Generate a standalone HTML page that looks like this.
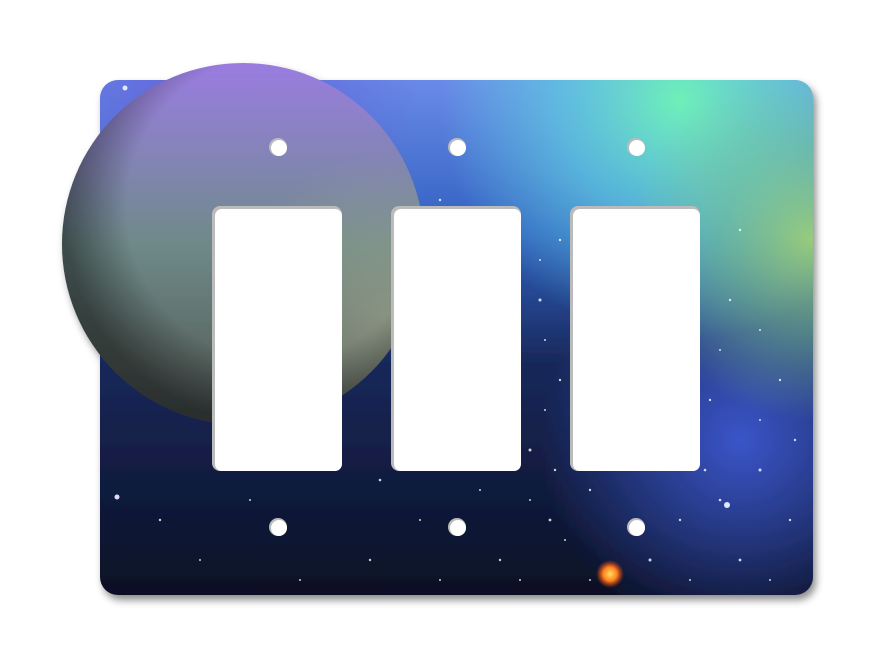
<!DOCTYPE html>
<html><head><style>
html,body{margin:0;padding:0;background:#fff;width:875px;height:658px;overflow:hidden}
svg{display:block}
</style></head><body>
<svg width="875" height="658" viewBox="0 0 875 658" xmlns="http://www.w3.org/2000/svg">
<defs>
<radialGradient id="g1" cx="680" cy="100" r="240" gradientUnits="userSpaceOnUse">
<stop offset="0" stop-color="#6ff0b8"/><stop offset="0.5" stop-color="#5fd0e0" stop-opacity="0.7"/><stop offset="1" stop-color="#5fd0e0" stop-opacity="0"/></radialGradient>
<radialGradient id="g2" cx="810" cy="240" r="180" gradientUnits="userSpaceOnUse">
<stop offset="0" stop-color="#a8d870" stop-opacity="0.85"/><stop offset="0.5" stop-color="#80c880" stop-opacity="0.5"/><stop offset="1" stop-color="#80c880" stop-opacity="0"/></radialGradient>
<radialGradient id="g3" cx="740" cy="440" r="200" gradientUnits="userSpaceOnUse">
<stop offset="0" stop-color="#3a55c8"/><stop offset="1" stop-color="#3a55c8" stop-opacity="0"/></radialGradient>
<radialGradient id="g4" cx="220" cy="80" r="200" gradientUnits="userSpaceOnUse">
<stop offset="0" stop-color="#6060d8"/><stop offset="1" stop-color="#6060d8" stop-opacity="0"/></radialGradient>
<linearGradient id="bg" x1="0" y1="0" x2="0" y2="1">
<stop offset="0" stop-color="#6a8ae8"/><stop offset="0.3" stop-color="#3060c0"/><stop offset="0.55" stop-color="#18285a"/><stop offset="1" stop-color="#0a1024"/></linearGradient>
<linearGradient id="moon" x1="0" y1="0" x2="0" y2="1">
<stop offset="0" stop-color="#9a7ce0"/><stop offset="0.25" stop-color="#8484b8"/><stop offset="0.5" stop-color="#6e8a88"/><stop offset="0.8" stop-color="#5c6a66"/><stop offset="1" stop-color="#4a5050"/></linearGradient>
<radialGradient id="moonr" cx="0.9" cy="0.7" r="0.45">
<stop offset="0" stop-color="#b0b090" stop-opacity="0.5"/><stop offset="1" stop-color="#b0b090" stop-opacity="0"/></radialGradient>
<radialGradient id="moonl" cx="0.6" cy="0.4" r="0.6">
<stop offset="0.7" stop-color="#000" stop-opacity="0"/><stop offset="1" stop-color="#000" stop-opacity="0.45"/></radialGradient>
<radialGradient id="sun" cx="0.5" cy="0.5" r="0.5">
<stop offset="0" stop-color="#ffe060"/><stop offset="0.5" stop-color="#ff8020"/><stop offset="1" stop-color="#ff4000" stop-opacity="0"/></radialGradient>
<filter id="sh" x="-10%" y="-10%" width="120%" height="120%"><feDropShadow dx="3" dy="5" stdDeviation="4" flood-opacity="0.45"/></filter>
<clipPath id="plate"><rect x="100" y="80" width="713" height="515" rx="18"/></clipPath>
</defs>
<g filter="url(#sh)">
<rect x="100" y="80" width="713" height="515" rx="18" fill="url(#bg)"/>
<g clip-path="url(#plate)">
<rect x="100" y="80" width="713" height="515" fill="url(#g4)"/>
<rect x="100" y="80" width="713" height="515" fill="url(#g3)"/>
<rect x="100" y="80" width="713" height="515" fill="url(#g1)"/>
<rect x="100" y="80" width="713" height="515" fill="url(#g2)"/>
<g fill="#fff" opacity="0.8">
<circle cx="540" cy="300" r="1.5"/><circle cx="560" cy="380" r="1.2"/><circle cx="530" cy="450" r="1.5"/><circle cx="720" cy="500" r="1.3"/><circle cx="760" cy="470" r="1.5"/><circle cx="650" cy="560" r="1.5"/><circle cx="500" cy="560" r="1.2"/><circle cx="420" cy="520" r="1"/><circle cx="380" cy="480" r="1.3"/><circle cx="200" cy="560" r="1"/><circle cx="160" cy="520" r="1.2"/><circle cx="740" cy="560" r="1.4"/><circle cx="780" cy="380" r="1.2"/><circle cx="730" cy="300" r="1.2"/><circle cx="550" cy="520" r="1.4"/><circle cx="590" cy="490" r="1.2"/><circle cx="680" cy="520" r="1.2"/><circle cx="560" cy="240" r="1.2"/><circle cx="740" cy="230" r="1.2"/><circle cx="440" cy="200" r="1.2"/><circle cx="370" cy="560" r="1.2"/><circle cx="250" cy="500" r="1"/><circle cx="710" cy="400" r="1.2"/><circle cx="790" cy="520" r="1.2"/>
<circle cx="545" cy="410" r="1"/><circle cx="555" cy="470" r="1.2"/><circle cx="565" cy="540" r="1"/><circle cx="530" cy="500" r="1"/><circle cx="690" cy="440" r="1"/><circle cx="705" cy="470" r="1.3"/><circle cx="760" cy="420" r="1"/><circle cx="795" cy="440" r="1.2"/><circle cx="520" cy="580" r="1"/><circle cx="480" cy="490" r="1"/><circle cx="590" cy="580" r="1"/><circle cx="690" cy="580" r="1"/><circle cx="770" cy="580" r="1"/><circle cx="400" cy="440" r="1"/><circle cx="540" cy="260" r="1"/><circle cx="545" cy="340" r="1"/><circle cx="720" cy="350" r="1"/><circle cx="760" cy="330" r="1"/><circle cx="440" cy="580" r="1"/><circle cx="300" cy="580" r="1"/>
</g>
<circle cx="727" cy="505" r="3" fill="#e0e8ff"/>
<circle cx="117" cy="497" r="2.5" fill="#e0d8ff"/>
<circle cx="125" cy="88" r="2.5" fill="#e0e8ff"/>
<circle cx="610" cy="574" r="14" fill="url(#sun)"/>
</g>
<circle cx="243" cy="244" r="181" fill="url(#moon)"/>
<circle cx="243" cy="244" r="181" fill="url(#moonr)"/>
<circle cx="243" cy="244" r="181" fill="url(#moonl)"/>
</g>
<g fill="#bbb">
<rect x="212" y="206" width="130" height="265" rx="8"/>
<rect x="391" y="206" width="130" height="265" rx="8"/>
<rect x="570" y="206" width="130" height="265" rx="8"/>
<circle cx="278" cy="147" r="9"/><circle cx="457" cy="147" r="9"/><circle cx="636" cy="147" r="9"/>
<circle cx="278" cy="527" r="9"/><circle cx="457" cy="527" r="9"/><circle cx="636" cy="527" r="9"/>
</g>
<g fill="#fff">
<rect x="215" y="209" width="127" height="262" rx="7"/>
<rect x="394" y="209" width="127" height="262" rx="7"/>
<rect x="573" y="209" width="127" height="262" rx="7"/>
<circle cx="279" cy="148" r="8"/><circle cx="458" cy="148" r="8"/><circle cx="637" cy="148" r="8"/>
<circle cx="279" cy="528" r="8"/><circle cx="458" cy="528" r="8"/><circle cx="637" cy="528" r="8"/>
</g>
</svg>
</body></html>
